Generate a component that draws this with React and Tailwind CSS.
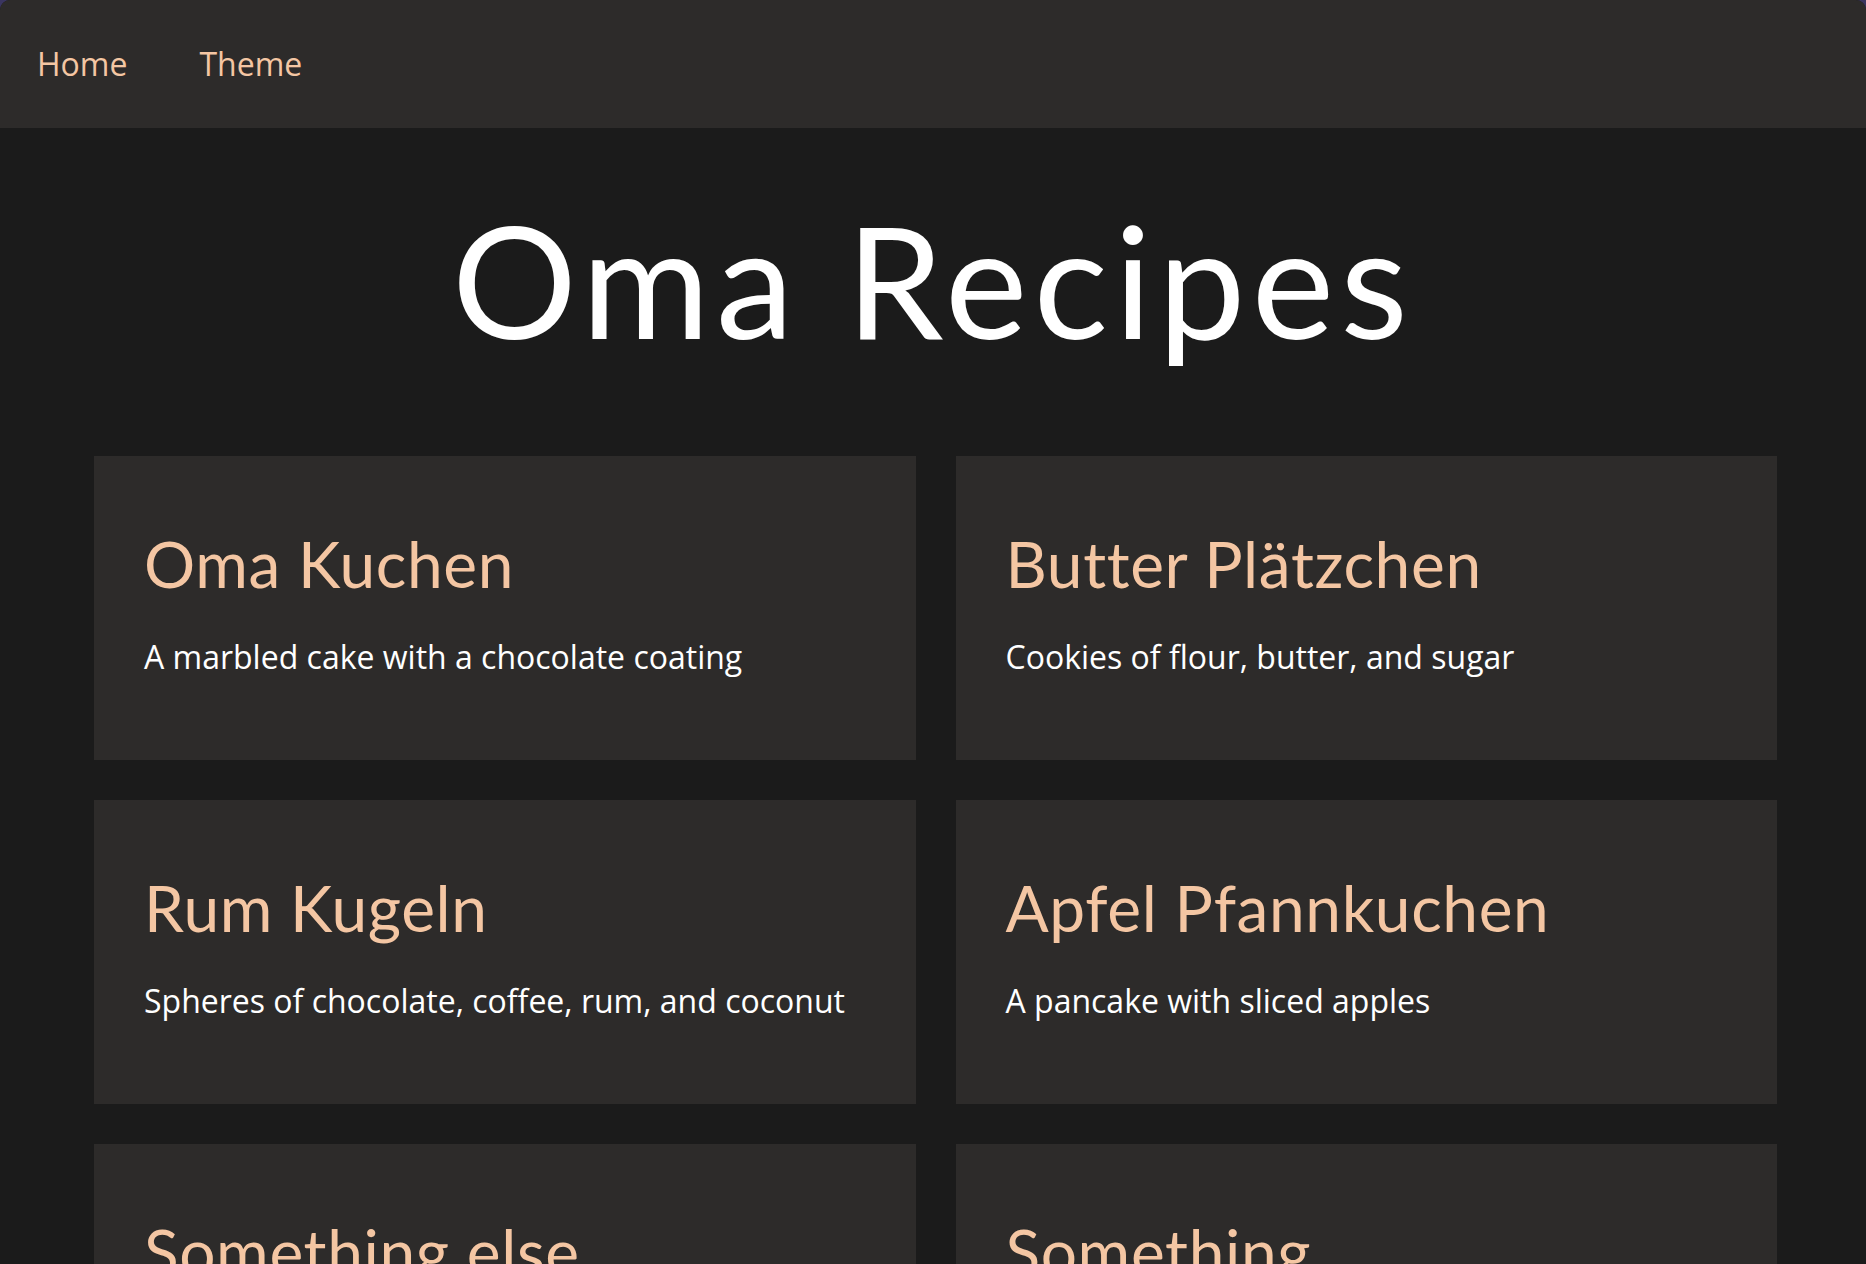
import React from "react";

const recipes = [
  { title: "Oma Kuchen", text: "A marbled cake with a chocolate coating" },
  { title: "Butter Plätzchen", text: "Cookies of flour, butter, and sugar" },
  { title: "Rum Kugeln", text: "Spheres of chocolate, coffee, rum, and coconut" },
  { title: "Apfel Pfannkuchen", text: "A pancake with sliced apples" },
  { title: "Something else", text: "Another family favourite" },
  { title: "Something", text: "One more recipe from Oma" },
];

const heading = { fontFamily: "Lato, 'Noto Sans', sans-serif" };
const body = { fontFamily: "'Open Sans', 'Noto Sans', sans-serif" };

function RecipeCard({ item }) {
  return (
    <div className="bg-[#2d2b2a] pt-[76px] pb-[81px] px-[50px]">
      <h2
        className="text-[64px] leading-none text-[#f4c6a3] tracking-[0.01em]"
        style={heading}
      >
        {item.title}
      </h2>
      <p className="mt-[39px] text-[32px] leading-[44px] text-white" style={body}>
        {item.text}
      </p>
    </div>
  );
}

export default function App() {
  return (
    <div className="min-h-screen bg-[#3a3560]">
      <div className="min-h-screen bg-[#1b1b1b] rounded-[10px] overflow-hidden">
        {/* nav */}
        <nav className="h-[128px] bg-[#2d2b2a] flex items-center pl-[37px] gap-[72px]" style={body}>
          <a className="text-[32px] text-[#f4c6a3]">Home</a>
          <a className="text-[32px] text-[#f4c6a3]">Theme</a>
        </nav>

        <h1
          className="mt-[73px] text-center text-[156px] leading-none text-white tracking-[0.04em]"
          style={heading}
        >
          Oma Recipes
        </h1>

        <div className="mt-[99px] pl-[94px] pr-[89px] pb-16 grid grid-cols-2 gap-10">
          {recipes.map((item, i) => (
            <RecipeCard key={i} item={item} />
          ))}
        </div>
      </div>
    </div>
  );
}
